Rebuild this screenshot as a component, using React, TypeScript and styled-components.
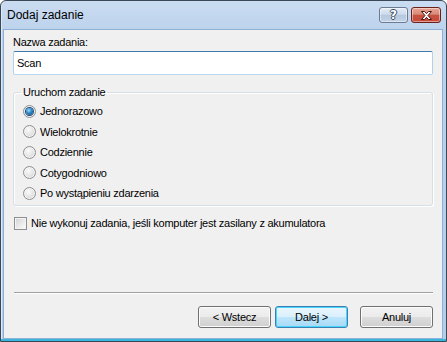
import styled, { createGlobalStyle } from "styled-components";

const GlobalStyle = createGlobalStyle`
  html, body {
    margin: 0;
    padding: 0;
    background: #ffffff;
  }
  * {
    box-sizing: border-box;
  }
`;

const Window = styled.div`
  width: 447px;
  height: 342px;
  display: flex;
  flex-direction: column;
  border: 1px solid #3c4756;
  border-radius: 6px 6px 0 0;
  padding: 0 3px 2px 2px;
  background: linear-gradient(#cadcf1 0%, #bcd2ec 30px, #b4cdea 100%);
  box-shadow: inset 0 -2px 0 #3ab6dc, inset 1px 0 0 #dce9f7;
  font-family: "Liberation Sans", Arial, sans-serif;
  font-size: 11px;
  color: #000;
`;

const TitleBar = styled.div`
  height: 28px;
  flex-shrink: 0;
  display: flex;
  align-items: flex-start;
  justify-content: space-between;
  padding: 0 2px 0 4px;
`;

const Title = styled.span`
  font-size: 12px;
  line-height: 28px;
  color: #000;
`;

const CaptionButtons = styled.div`
  display: flex;
  gap: 3px;
  padding-top: 6px;
`;

const CaptionButton = styled.div<{ $close?: boolean }>`
  width: ${(p) => (p.$close ? 30 : 29)}px;
  height: 16px;
  border-radius: 3px;
  display: flex;
  align-items: center;
  justify-content: center;
  border: 1px solid ${(p) => (p.$close ? "#6b2119" : "#6a7b92")};
  background: ${(p) =>
    p.$close
      ? "linear-gradient(#e9a593 0%, #d98a78 45%, #c45241 50%, #c9493a 100%)"
      : "linear-gradient(#e4ecf6 0%, #cddbeb 45%, #b6c8de 50%, #c2d3e8 100%)"};
  box-shadow: inset 0 0 0 1px rgba(255, 255, 255, 0.45);
`;

const HelpGlyph = styled.span`
  font-family: "DejaVu Sans", sans-serif;
  font-weight: bold;
  font-size: 12px;
  line-height: 12px;
  color: #fff;
  text-shadow: -1px 0 #3a4a60, 1px 0 #3a4a60, 0 -1px #3a4a60, 0 1px #3a4a60;
`;

const Client = styled.div`
  flex: 1;
  display: flex;
  flex-direction: column;
  background: #f0f0f0;
  border: 1px solid #8fb0d6;
  padding: 6px 9px 10px 9px;
  letter-spacing: -0.25px;
`;

const FieldLabel = styled.div`
  line-height: 13px;
`;

const TextInput = styled.input`
  margin-top: 2px;
  width: 100%;
  height: 24px;
  border: 1px solid;
  border-color: #3d7bad #b5cfe7 #b7d9ed #b5cfe7;
  border-radius: 2px;
  padding: 0 3px;
  font-family: inherit;
  font-size: 11px;
  letter-spacing: inherit;
  color: #000;
  background: #fff;
  outline: none;
`;

const Group = styled.fieldset`
  margin: 11px 0 0 0;
  padding: 2px 9px 1px 9px;
  border: 1px solid #d5dfe5;
  border-radius: 3px;
  box-shadow: inset 1px 1px 0 #fff, 1px 1px 0 #fff;
  min-width: 0;
`;

const Legend = styled.legend`
  padding: 0 2px;
  margin-left: -2px;
  line-height: 13px;
`;

const OptionRow = styled.div`
  height: 20.5px;
  display: flex;
  align-items: center;
  gap: 4px;
`;

const Radio = styled.span<{ $checked?: boolean }>`
  width: 13px;
  height: 13px;
  border-radius: 50%;
  flex-shrink: 0;
  display: flex;
  align-items: center;
  justify-content: center;
  border: 1px solid #8e8f8f;
  background: radial-gradient(circle at 40% 35%, #fbfbfb 0%, #e2e2e2 55%, #c8c8c8 100%);
  box-shadow: inset 0 0 0 1px #f4f4f4;

  &::after {
    content: "";
    display: ${(p) => (p.$checked ? "block" : "none")};
    width: 7px;
    height: 7px;
    border-radius: 50%;
    background: radial-gradient(circle at 40% 35%, #9edbff 0%, #2c86c9 45%, #0f3f6e 100%);
    box-shadow: 0 0 0 1px #1c4d7c;
  }
`;

const CheckRow = styled.div`
  margin-top: 11px;
  padding-left: 1px;
  height: 13px;
  display: flex;
  align-items: center;
  gap: 4px;
`;

const CheckBox = styled.span`
  width: 13px;
  height: 13px;
  flex-shrink: 0;
  border: 1px solid #8e8f8f;
  background: linear-gradient(135deg, #d2d2d2 0%, #e8e8e8 50%, #fdfdfd 100%);
  box-shadow: inset 0 0 0 1px #f4f4f4;
`;

const Separator = styled.div`
  margin-top: auto;
  margin-left: 1px;
  height: 2px;
  border-top: 1px solid #a0a0a0;
  border-bottom: 1px solid #ffffff;
`;

const ButtonRow = styled.div`
  margin-top: 12px;
  display: flex;
  justify-content: flex-end;
`;

const Button = styled.div<{ $default?: boolean; $gap?: number }>`
  width: 73px;
  height: 22px;
  margin-left: ${(p) => p.$gap ?? 0}px;
  display: flex;
  align-items: center;
  justify-content: center;
  border-radius: 3px;
  border: 1px solid ${(p) => (p.$default ? "#3c7fb1" : "#707070")};
  background: ${(p) =>
    p.$default
      ? "linear-gradient(#eaf6fd 0%, #d9f0fc 50%, #bee6fd 50%, #a7d9f5 100%)"
      : "linear-gradient(#f2f2f2 0%, #ebebeb 50%, #dddddd 50%, #cfcfcf 100%)"};
  box-shadow: inset 0 0 0 1px ${(p) => (p.$default ? "#48d6ff" : "#fcfcfc")};
  line-height: 13px;
`;

const options = ["Jednorazowo", "Wielokrotnie", "Codziennie", "Cotygodniowo", "Po wystąpieniu zdarzenia"];

export default function App() {
  return (
    <>
      <GlobalStyle />
      <Window>
        <TitleBar>
          <Title>Dodaj zadanie</Title>
          <CaptionButtons>
            <CaptionButton>
              <HelpGlyph>?</HelpGlyph>
            </CaptionButton>
            <CaptionButton $close>
              <svg width="13" height="11" viewBox="0 0 13 11">
                <path
                  d="M1.5 1.5h3l2 2.2 2-2.2h3l-3.5 4 3.5 4h-3l-2-2.2-2 2.2h-3l3.5-4z"
                  fill="#fff"
                  stroke="#4a1510"
                  strokeWidth="1"
                  strokeLinejoin="round"
                />
              </svg>
            </CaptionButton>
          </CaptionButtons>
        </TitleBar>
        <Client>
          <FieldLabel>Nazwa zadania:</FieldLabel>
          <TextInput defaultValue="Scan" />
          <Group>
            <Legend>Uruchom zadanie</Legend>
            {options.map((o, i) => (
              <OptionRow key={o}>
                <Radio $checked={i === 0} />
                <span>{o}</span>
              </OptionRow>
            ))}
          </Group>
          <CheckRow>
            <CheckBox />
            <span>Nie wykonuj zadania, jeśli komputer jest zasilany z akumulatora</span>
          </CheckRow>
          <Separator />
          <ButtonRow>
            <Button>&lt; Wstecz</Button>
            <Button $default $gap={4}>
              Dalej &gt;
            </Button>
            <Button $gap={12}>Anuluj</Button>
          </ButtonRow>
        </Client>
      </Window>
    </>
  );
}
